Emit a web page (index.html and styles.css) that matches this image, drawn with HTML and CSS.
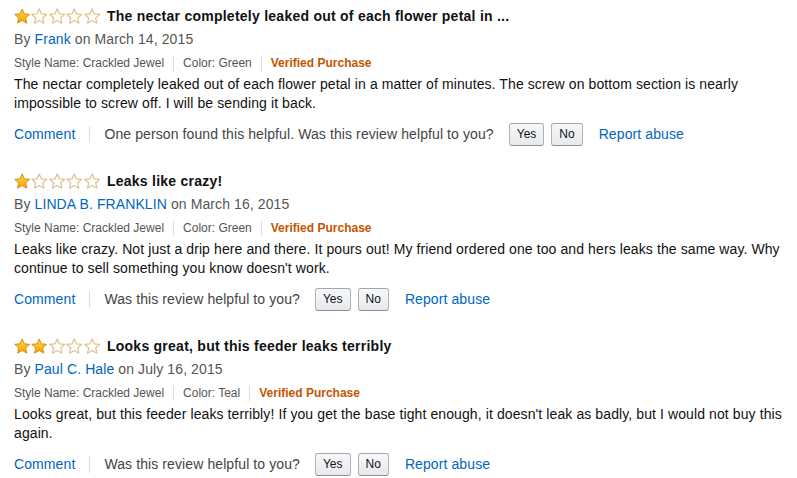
FILE: index.html
```html
<!DOCTYPE html>
<html>
<head>
<meta charset="utf-8">
<link rel="stylesheet" href="styles.css">
</head>
<body>
<svg width="0" height="0" class="defs">
  <defs>
    <linearGradient id="gold" x1="0" y1="0" x2="0" y2="1">
      <stop offset="0" stop-color="#ffd94a"/>
      <stop offset="1" stop-color="#f7a000"/>
    </linearGradient>
    <polygon id="star" points="8,0.9 10.1,5.7 15.3,6.2 11.4,9.7 12.5,14.8 8,12.2 3.5,14.8 4.6,9.7 0.7,6.2 5.9,5.7"/>
  </defs>
</svg>
<div class="reviews">
  <div class="review">
    <div class="title-row">
      <span class="stars">
        <svg viewBox="0 0 16 16" class="star"><use href="#star" class="full"/></svg><svg viewBox="0 0 16 16" class="star"><use href="#star" class="empty"/></svg><svg viewBox="0 0 16 16" class="star"><use href="#star" class="empty"/></svg><svg viewBox="0 0 16 16" class="star"><use href="#star" class="empty"/></svg><svg viewBox="0 0 16 16" class="star"><use href="#star" class="empty"/></svg>
      </span>
      <span class="title">The nectar completely leaked out of each flower petal in ...</span>
    </div>
    <div class="byline">By <a class="link author">Frank</a> on March 14, 2015</div>
    <div class="meta"><span>Style Name: Crackled Jewel</span><span class="sep"></span><span>Color: Green</span><span class="sep"></span><span class="verified">Verified Purchase</span></div>
    <div class="body">The nectar completely leaked out of each flower petal in a matter of minutes. The screw on bottom section is nearly impossible to screw off. I will be sending it back.</div>
    <div class="actions"><a class="link">Comment</a><span class="vsep"></span><span class="helpful">One person found this helpful. Was this review helpful to you?</span><button class="btn">Yes</button><button class="btn">No</button><a class="link report">Report abuse</a></div>
  </div>

  <div class="review">
    <div class="title-row">
      <span class="stars">
        <svg viewBox="0 0 16 16" class="star"><use href="#star" class="full"/></svg><svg viewBox="0 0 16 16" class="star"><use href="#star" class="empty"/></svg><svg viewBox="0 0 16 16" class="star"><use href="#star" class="empty"/></svg><svg viewBox="0 0 16 16" class="star"><use href="#star" class="empty"/></svg><svg viewBox="0 0 16 16" class="star"><use href="#star" class="empty"/></svg>
      </span>
      <span class="title">Leaks like crazy!</span>
    </div>
    <div class="byline">By <a class="link author">LINDA B. FRANKLIN</a> on March 16, 2015</div>
    <div class="meta"><span>Style Name: Crackled Jewel</span><span class="sep"></span><span>Color: Green</span><span class="sep"></span><span class="verified">Verified Purchase</span></div>
    <div class="body">Leaks like crazy. Not just a drip here and there. It pours out! My friend ordered one too and hers leaks the same way. Why continue to sell something you know doesn't work.</div>
    <div class="actions"><a class="link">Comment</a><span class="vsep"></span><span class="helpful">Was this review helpful to you?</span><button class="btn">Yes</button><button class="btn">No</button><a class="link report">Report abuse</a></div>
  </div>

  <div class="review">
    <div class="title-row">
      <span class="stars">
        <svg viewBox="0 0 16 16" class="star"><use href="#star" class="full"/></svg><svg viewBox="0 0 16 16" class="star"><use href="#star" class="full"/></svg><svg viewBox="0 0 16 16" class="star"><use href="#star" class="empty"/></svg><svg viewBox="0 0 16 16" class="star"><use href="#star" class="empty"/></svg><svg viewBox="0 0 16 16" class="star"><use href="#star" class="empty"/></svg>
      </span>
      <span class="title">Looks great, but this feeder leaks terribly</span>
    </div>
    <div class="byline">By <a class="link author">Paul C. Hale</a> on July 16, 2015</div>
    <div class="meta"><span>Style Name: Crackled Jewel</span><span class="sep"></span><span>Color: Teal</span><span class="sep"></span><span class="verified">Verified Purchase</span></div>
    <div class="body">Looks great, but this feeder leaks terribly! If you get the base tight enough, it doesn't leak as badly, but I would not buy this again.</div>
    <div class="actions"><a class="link">Comment</a><span class="vsep"></span><span class="helpful">Was this review helpful to you?</span><button class="btn">Yes</button><button class="btn">No</button><a class="link report">Report abuse</a></div>
  </div>
</div>
</body>
</html>
```

FILE: styles.css
```css
html, body {
  margin: 0;
  padding: 0;
  background: #ffffff;
}
body {
  font-family: "Liberation Sans", Arial, sans-serif;
  font-size: 14px;
  letter-spacing: 0.1px;
  color: #111111;
}
.defs {
  position: absolute;
  width: 0;
  height: 0;
}
.reviews {
  padding: 6px 14px 0 14px;
}
.review {
  margin-bottom: 25px;
}
.title-row {
  display: flex;
  align-items: center;
  height: 20px;
}
.stars {
  display: flex;
  gap: 1px;
  margin-right: 7px;
}
.star {
  width: 16.4px;
  height: 16.4px;
  display: block;
}
.full {
  fill: url(#gold);
  stroke: #d48a0c;
  stroke-width: 0.9;
  stroke-linejoin: round;
}
.empty {
  fill: #ffffff;
  stroke: #dcc38f;
  stroke-width: 1.2;
  stroke-linejoin: round;
}
.title {
  font-weight: bold;
  font-size: 14px;
  letter-spacing: 0.25px;
  color: #111111;
}
.byline {
  margin-top: 3px;
  line-height: 20px;
  color: #555555;
}
.link {
  color: #0066c0;
  text-decoration: none;
}
.author {
  color: #0066c0;
}
.meta {
  margin-top: 4px;
  line-height: 20px;
  font-size: 12px;
  letter-spacing: 0;
  color: #555555;
  display: flex;
  align-items: center;
}
.sep {
  width: 1px;
  height: 15px;
  background: #dddddd;
  margin: 0 9px;
}
.verified {
  color: #c45500;
  font-weight: bold;
}
.body {
  margin-top: 2px;
  line-height: 19px;
  color: #111111;
}
.actions {
  margin-top: 9px;
  height: 24px;
  display: flex;
  align-items: center;
  color: #555555;
}
.vsep {
  width: 1px;
  height: 17px;
  background: #dddddd;
  margin: 0 14px;
}
.helpful {
  color: #444444;
  margin-right: 15px;
}
.btn {
  font-family: "Liberation Sans", Arial, sans-serif;
  font-size: 12px;
  color: #111111;
  height: 23px;
  padding: 0 7px;
  margin: 0 7px 0 0;
  border: 1px solid #adb1b8;
  border-top-color: #a2a6ac;
  border-bottom-color: #8d9096;
  border-radius: 3px;
  background: linear-gradient(to bottom, #f7f8fa, #e7e9ec);
  line-height: 21px;
}
.report {
  margin-left: 9px;
}
```
